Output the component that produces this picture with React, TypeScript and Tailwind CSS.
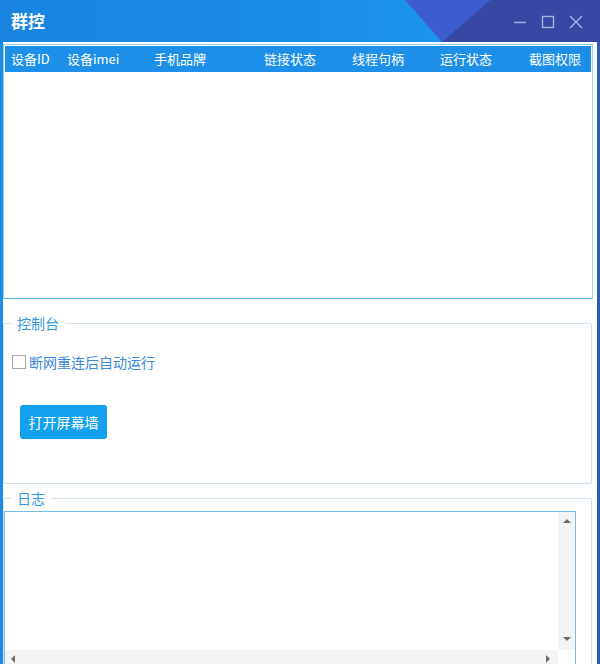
import { useState } from "react"

const columns = [
  { label: "设备ID", width: "w-[56px]" },
  { label: "设备imei", width: "w-[87px]" },
  { label: "手机品牌", width: "w-[110px]" },
  { label: "链接状态", width: "w-[88px]" },
  { label: "线程句柄", width: "w-[88px]" },
  { label: "运行状态", width: "w-[89px]" },
  { label: "截图权限", width: "flex-1" },
]

function TitleBar() {
  return (
    <div className="relative flex h-[42px] items-center bg-gradient-to-r from-[#1985e1] via-[#1a8ce6] to-[#1fa0f3]">
      {/* decorative angled bands on the right of the title bar */}
      <svg className="absolute inset-0" width="600" height="42" aria-hidden>
        <polygon points="405,0 490,0 442,42" fill="#3d5ccd" />
        <polygon points="490,0 600,0 600,42 442,42" fill="#3747a3" />
      </svg>
      <span className="relative pl-[11px] text-[17px] font-bold text-white">群控</span>
      <div className="relative ml-auto flex items-center gap-[14px] pr-[17px] pt-[2px]">
        <svg width="14" height="14" viewBox="0 0 14 14">
          <line x1="1" y1="7.5" x2="13" y2="7.5" stroke="#a9b6e4" strokeWidth="1.4" />
        </svg>
        <svg width="14" height="14" viewBox="0 0 14 14">
          <rect x="1.5" y="1.5" width="11" height="11" fill="none" stroke="#a9b6e4" strokeWidth="1.4" />
        </svg>
        <svg width="14" height="14" viewBox="0 0 14 14">
          <path d="M1 1 L13 13 M13 1 L1 13" stroke="#a9b6e4" strokeWidth="1.4" />
        </svg>
      </div>
    </div>
  )
}

function Legend({ children }: { children: string }) {
  return (
    <legend className="ml-[7px] px-[6px] text-[14px] leading-[20px] text-[#3598dc]">
      {children}
    </legend>
  )
}

function Arrow({ dir }: { dir: "up" | "down" | "left" | "right" }) {
  const points = {
    up: "1,6 5,2 9,6",
    down: "1,2 5,6 9,2",
    left: "6,1 2,5 6,9",
    right: "2,1 6,5 2,9",
  }[dir]
  return (
    <svg width="10" height="10" viewBox="0 0 10 10" aria-hidden>
      <polygon points={points} fill="#6b6b6b" />
    </svg>
  )
}

export default function App() {
  const [autoRun, setAutoRun] = useState(false)

  return (
    <div className="h-[664px] w-[600px] overflow-hidden bg-white font-['Microsoft_YaHei','Noto_Sans_CJK_SC',sans-serif]">
      <TitleBar />

      <div className="h-[622px] border-l-[3px] border-r-[3px] border-l-[#1e8ae6] border-r-[#2b5cb0] pt-[2px]">
        {/* device table */}
        <div className="mr-[4px] h-[255px] border border-[#8fd3f0] border-b-[#4fb8d8] p-px">
          <div className="flex h-[26px] items-center bg-[#1d8fe9] text-[13px] text-white">
            {columns.map((col) => (
              <div key={col.label} className={`${col.width} whitespace-nowrap pl-[6px]`}>
                {col.label}
              </div>
            ))}
          </div>
        </div>

        {/* control panel */}
        <fieldset className="mr-[5px] mt-[14px] h-[171px] rounded-[2px] border border-[#cfe2ee]">
          <Legend>控制台</Legend>
          <label className="ml-[8px] mt-[19px] flex h-[20px] w-fit cursor-pointer items-center">
            <input
              type="checkbox"
              checked={autoRun}
              onChange={(e) => setAutoRun(e.target.checked)}
              className="size-[14px] appearance-none border border-[#a8a8a8] bg-white"
            />
            <span className="ml-[3px] text-[14px] text-[#3a88d6]">断网重连后自动运行</span>
          </label>
          <button
            type="button"
            className="ml-[16px] mt-[33px] h-[34px] w-[87px] rounded-[3px] bg-[#12a0ef] text-[14px] text-white"
          >
            打开屏幕墙
          </button>
        </fieldset>

        {/* log */}
        <fieldset className="mr-[5px] mt-[4px] h-[200px] rounded-[2px] border border-[#cfe2ee]">
          <Legend>日志</Legend>
          <div className="mt-[3px] flex h-[160px] w-[572px] flex-col border border-[#78bde8]">
            <div className="flex h-[138px]">
              <div className="flex-1 bg-white" />
              <div className="flex w-[17px] flex-col items-center justify-between bg-[#f4f4f4] py-[5px]">
                <Arrow dir="up" />
                <Arrow dir="down" />
              </div>
            </div>
            <div className="flex h-[17px]">
              <div className="flex flex-1 items-center justify-between bg-[#f4f4f4] px-[4px]">
                <Arrow dir="left" />
                <Arrow dir="right" />
              </div>
              <div className="w-[17px] bg-white" />
            </div>
          </div>
        </fieldset>
      </div>
    </div>
  )
}
